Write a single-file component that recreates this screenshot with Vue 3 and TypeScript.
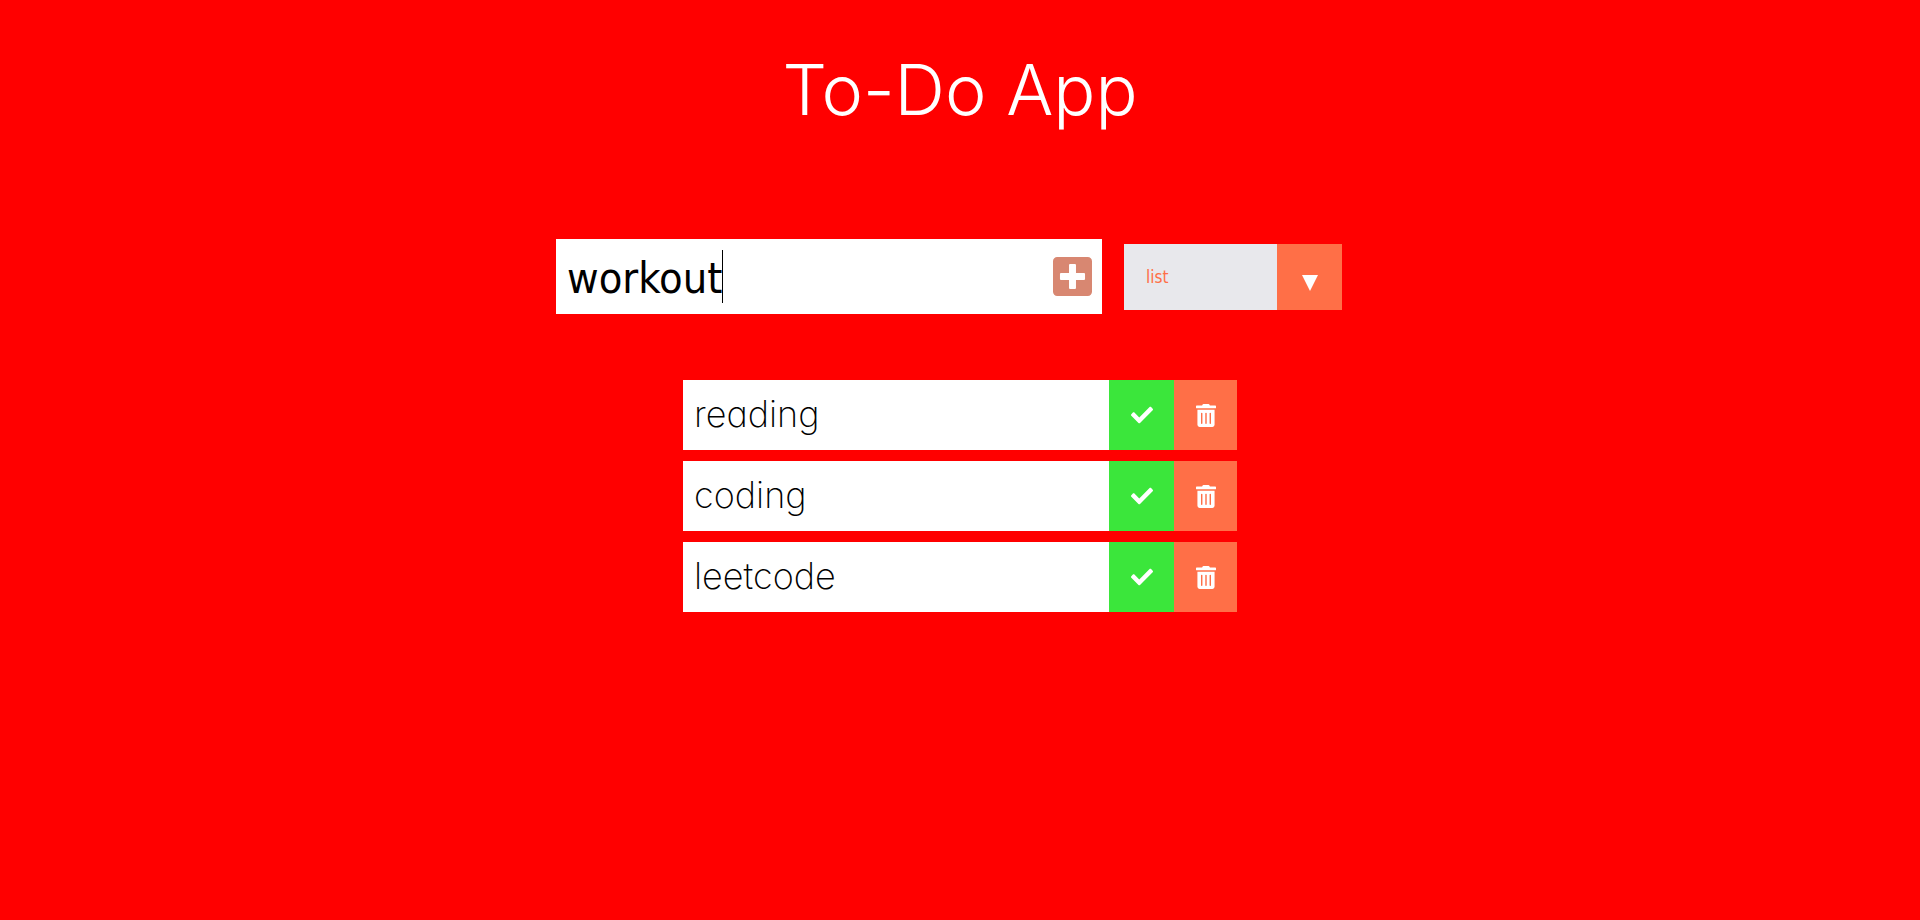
<script setup lang="ts">
import { computed, onMounted, ref } from 'vue'

interface Todo {
  id: number
  text: string
  completed: boolean
}

const draft = ref('workout')
const filter = ref('all')
const todos = ref<Todo[]>([
  { id: 1, text: 'reading', completed: false },
  { id: 2, text: 'coding', completed: false },
  { id: 3, text: 'leetcode', completed: false },
])

const shown = computed(() =>
  todos.value.filter(
    (t) => filter.value === 'all' || (filter.value === 'completed') === t.completed,
  ),
)

const field = ref<HTMLInputElement | null>(null)
const mounted = ref(false)

// Width of the typed text, which places the thin caret after it.
const caretLeft = computed(() => {
  if (!mounted.value || !field.value) return 0
  const style = getComputedStyle(field.value)
  const ctx = document.createElement('canvas').getContext('2d')
  if (!ctx) return 0
  ctx.font = `${style.fontSize} ${style.fontFamily}`
  return Math.round(parseFloat(style.paddingLeft) + ctx.measureText(draft.value).width)
})

onMounted(() => {
  mounted.value = true
})

function add() {
  const text = draft.value.trim()
  if (!text) return
  todos.value.push({ id: Date.now(), text, completed: false })
  draft.value = ''
}

function remove(id: number) {
  todos.value = todos.value.filter((t) => t.id !== id)
}
</script>

<template>
  <div class="app">
    <header>
      <h1>To-Do App</h1>
    </header>

    <form class="entry" @submit.prevent="add">
      <div class="field">
        <input ref="field" v-model="draft" type="text" aria-label="New task" />
        <span class="caret" :style="{ left: caretLeft + 'px' }"></span>
        <button class="add" type="submit" aria-label="Add task">
          <svg viewBox="0 0 448 448" aria-hidden="true">
            <path
              fill-rule="evenodd"
              d="M48 0H400A48 48 0 0 1 448 48V400A48 48 0 0 1 400 448H48A48 48 0 0 1 0 400V48A48 48 0 0 1 48 0ZM196 80a12 12 0 0 0-12 12v92H92a12 12 0 0 0-12 12v56a12 12 0 0 0 12 12h92v92a12 12 0 0 0 12 12h56a12 12 0 0 0 12-12v-92h92a12 12 0 0 0 12-12v-56a12 12 0 0 0-12-12h-92V92a12 12 0 0 0-12-12Z"
            />
          </svg>
        </button>
      </div>
      <div class="select">
        <select v-model="filter" aria-label="Filter tasks">
          <option value="all">list</option>
          <option value="completed">completed</option>
          <option value="uncompleted">uncompleted</option>
        </select>
        <span class="arrow">
          <svg viewBox="0 0 16 16" aria-hidden="true"><path d="M0 0H16L8 16Z" /></svg>
        </span>
      </div>
    </form>

    <ul class="list">
      <li v-for="todo in shown" :key="todo.id" :class="{ completed: todo.completed }">
        <span class="text">{{ todo.text }}</span>
        <button
          class="check"
          type="button"
          :aria-label="'Complete ' + todo.text"
          @click="todo.completed = !todo.completed"
        >
          <svg viewBox="0 0 512 512" aria-hidden="true">
            <path
              d="M173.9 439.4l-166.4-166.4c-10-10-10-26.2 0-36.2l36.2-36.2c10-10 26.2-10 36.2 0L192 312.7 432.1 72.6c10-10 26.2-10 36.2 0l36.2 36.2c10 10 10 26.2 0 36.2l-294.4 294.4c-10 10-26.2 10-36.2 0z"
            />
          </svg>
        </button>
        <button
          class="trash"
          type="button"
          :aria-label="'Delete ' + todo.text"
          @click="remove(todo.id)"
        >
          <svg viewBox="0 0 448 512" aria-hidden="true">
            <path
              fill-rule="evenodd"
              d="M32 464a48 48 0 0 0 48 48h288a48 48 0 0 0 48-48V128H32zm272-256a16 16 0 0 1 32 0v224a16 16 0 0 1-32 0zm-96 0a16 16 0 0 1 32 0v224a16 16 0 0 1-32 0zm-96 0a16 16 0 0 1 32 0v224a16 16 0 0 1-32 0zM432 32H312l-9.400-18.700A24 24 0 0 0 281.100 0H166.800a23.700 23.700 0 0 0-21.400 13.300L136 32H16A16 16 0 0 0 0 48v32a16 16 0 0 0 16 16h416a16 16 0 0 0 16-16V48a16 16 0 0 0-16-16z"
            />
          </svg>
        </button>
      </li>
    </ul>
  </div>
</template>

<style>
html,
body {
  margin: 0;
  background: #ff0000;
}
</style>

<style scoped>
.app {
  min-height: 100vh;
  box-sizing: border-box;
  color: #fff;
  font-family: Inter, 'Liberation Sans', sans-serif;
  font-optical-sizing: none;
  font-feature-settings: 'cv11';
}

.app * {
  box-sizing: border-box;
}

header {
  display: flex;
  justify-content: center;
  padding: 40px 16px 0;
}

h1 {
  margin: 0;
  font-size: 70px;
  font-weight: 300;
  line-height: 100px;
}

button,
input,
select {
  margin: 0;
  border: 0;
  border-radius: 0;
  outline: none;
  font-family: 'DejaVu Sans Condensed', 'Noto Sans', sans-serif;
}

button {
  cursor: pointer;
}

svg {
  display: block;
  fill: currentColor;
}

.entry {
  display: flex;
  flex-wrap: wrap;
  align-items: center;
  justify-content: center;
  margin-top: 99px;
}

.field {
  position: relative;
  display: flex;
  width: 546px;
  max-width: 100%;
  height: 75px;
  background: #fff;
}

.field input {
  flex: 1;
  min-width: 0;
  padding: 2px 0 0 11px;
  background: transparent;
  color: #000;
  caret-color: transparent;
  font-size: 43px;
}

.caret {
  position: absolute;
  top: 11px;
  bottom: 11px;
  width: 1px;
  background: #000;
}

.add {
  display: flex;
  align-items: center;
  padding: 0 10px;
  background: transparent;
  color: #d88771;
}

.add svg {
  width: 39px;
  height: 39px;
}

.select {
  display: flex;
  position: relative;
  width: 218px;
  height: 66px;
  margin: 0 22px;
}

.select select {
  width: 100%;
  padding: 0 88px 0 22px;
  appearance: none;
  background: #e8e8ec;
  color: #ff6f47;
  font-size: 17px;
  cursor: pointer;
}

.arrow {
  position: absolute;
  top: 0;
  right: 0;
  bottom: 0;
  display: flex;
  align-items: center;
  justify-content: center;
  width: 65px;
  padding-top: 12px;
  background: #ff6f47;
  pointer-events: none;
}

.arrow svg {
  width: 16px;
  height: 16px;
}

.list {
  display: flex;
  flex-direction: column;
  gap: 11px;
  width: 554px;
  max-width: 100%;
  margin: 66px auto 0;
  padding: 0;
  list-style: none;
}

li {
  display: flex;
  height: 70px;
  background: #fff;
  color: #000;
}

.text {
  flex: 1;
  padding: 0 11px;
  font-size: 36px;
  font-weight: 200;
  line-height: 68px;
}

.check,
.trash {
  display: flex;
  align-items: center;
  justify-content: center;
  padding: 0;
  color: #fff;
}

.check {
  width: 65px;
  background: #3be63b;
}

.trash {
  width: 63px;
  background: #ff6f47;
}

.check svg {
  width: 22px;
  height: 22px;
}

.trash svg {
  width: 20px;
  height: 23px;
}

.completed {
  opacity: 0.5;
}

.completed .text {
  text-decoration: line-through;
}
</style>
